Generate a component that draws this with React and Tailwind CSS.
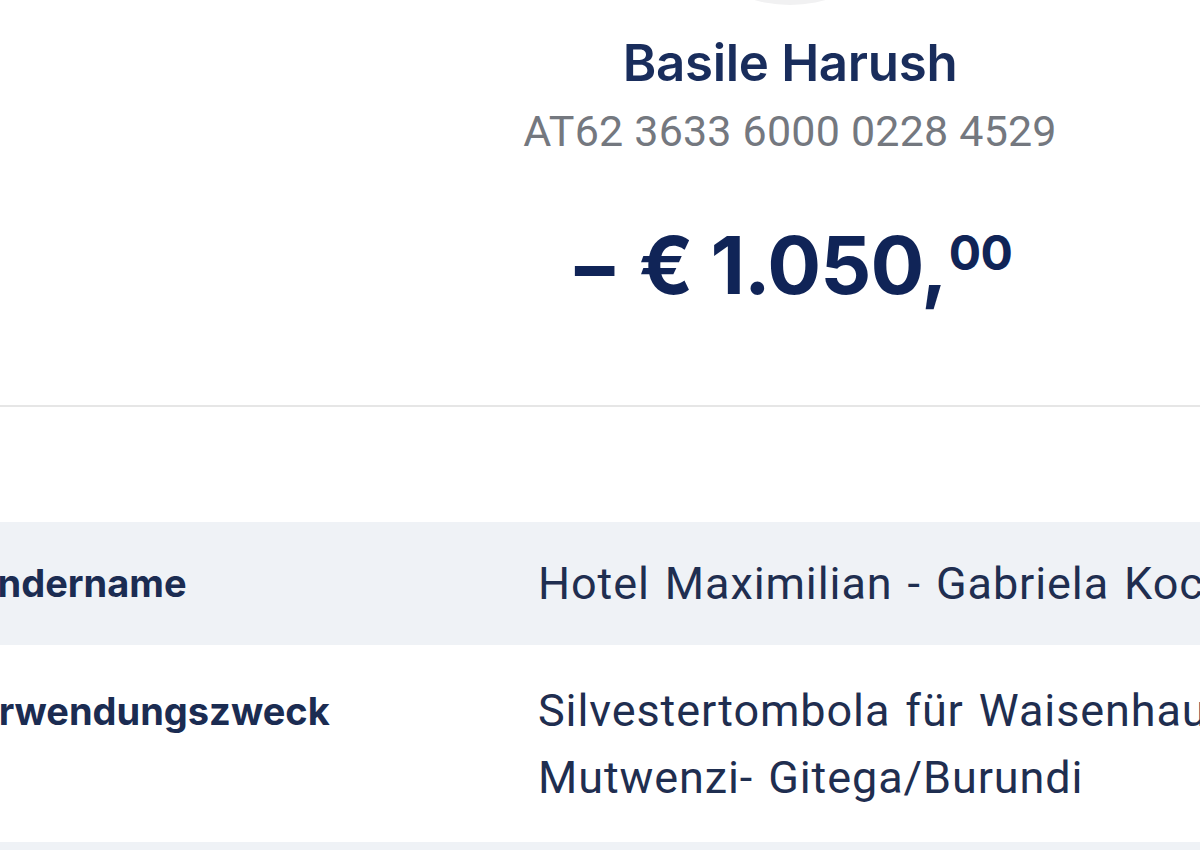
export default function App() {
  return (
    <div
      className="w-[1200px] h-[850px] overflow-hidden bg-white relative"
      style={{ fontFamily: "Inter, 'Noto Sans', sans-serif" }}
    >
      <div className="ml-[380px] w-[820px] flex flex-col items-center">
        <div className="w-[260px] h-[260px] shrink-0 rounded-full bg-[#f1f1f2] -mt-[255px]" />
        <div className="mt-[28px] text-[51px] leading-[60px] font-semibold text-[#192d5c] tracking-[-0.3px]">
          Basile Harush
        </div>
        <div
          className="mt-[13px] text-[43px] leading-[50px] text-[#74787f] tracking-[0.2px]"
          style={{ fontFamily: "Roboto, 'Liberation Sans', sans-serif" }}
        >
          AT62 3633 6000 0228 4529
        </div>
        <div className="mt-[61px] flex items-start text-[#102457] font-bold">
          <span className="text-[80px] leading-[96px] tracking-[-1px]">− € 1.050,</span>
          <span className="text-[48px] leading-[48px] mt-[12px] ml-[2px] tracking-[-0.5px]">00</span>
        </div>
      </div>
      <div className="mt-[92px] border-b-2 border-[#e6e6e6]" />
      <div className="mt-[115px] flex flex-col">
        <div className="flex bg-[#eff2f6] h-[123px] items-center -ml-[50px]">
          <div className="w-[588px] shrink-0 text-[38px] font-bold text-[#1b2c52]">Sendername</div>
          <div
            className="w-[820px] shrink-0 text-[45px] leading-[66px] tracking-[0.9px] [word-spacing:3px] text-[#1f2e50] whitespace-nowrap"
            style={{ fontFamily: "Roboto, 'Liberation Sans', sans-serif" }}
          >
            Hotel Maximilian - Gabriela Koch
          </div>
        </div>
        <div className="flex bg-white h-[197px] items-center -ml-[50px]">
          <div className="w-[588px] shrink-0 self-start pt-[38px] text-[38px] font-bold text-[#1b2c52]">Verwendungszweck</div>
          <div
            className="w-[800px] shrink-0 text-[45px] leading-[67px] tracking-[0.9px] [word-spacing:3px] text-[#1f2e50]"
            style={{ fontFamily: "Roboto, 'Liberation Sans', sans-serif" }}
          >
            Silvestertombola für Waisenhaus Mutwenzi- Gitega/Burundi
          </div>
        </div>
        <div className="flex bg-[#eff2f6] h-[122px]" />
      </div>
    </div>
  );
}
